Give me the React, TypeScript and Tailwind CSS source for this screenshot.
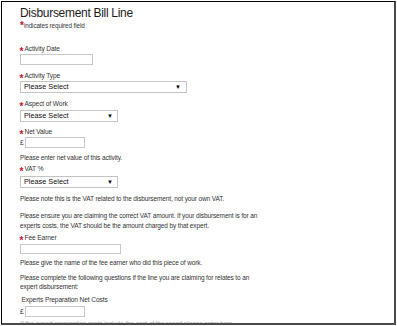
import React from "react";

const Req = () => (
  <span className="inline-block w-[4px] text-[#c8102e] font-bold text-[10px] leading-[8px] relative top-[2.5px] -ml-[0.5px] mr-[0.5px]">*</span>
);

const Label = ({ children, req = true, className = "" }: { children: React.ReactNode; req?: boolean; className?: string }) => (
  <div className={`flex items-start h-[8px] text-[6.6px] leading-[8px] tracking-[-0.1px] text-[#333] ${className}`}>
    {req ? <Req /> : <span className="inline-block w-[1px]" />}
    <span className="ml-[0.5px]">{children}</span>
  </div>
);

const Select = ({ w, className = "" }: { w: string; className?: string }) => (
  <div className={`${w} h-[12px] border border-[#c4c4c4] bg-white flex items-center justify-between pl-[3px] pr-[4px] ${className}`}>
    <span className="text-[7.3px] leading-[10px] text-[#111]">Please Select</span>
    <span className="text-[6px] leading-[10px] text-black">▼</span>
  </div>
);

const Input = ({ w, className = "" }: { w: string; className?: string }) => (
  <div className={`${w} h-[11px] border border-[#c8c8c8] bg-white ${className}`} />
);

const Money = ({ className = "" }: { className?: string }) => (
  <div className={`flex items-center ${className}`}>
    <span className="w-[5px] text-[6.6px] leading-[11px] text-[#333]">£</span>
    <div className="w-[60px] h-[11px] border border-[#c8c8c8] bg-white" />
  </div>
);

const P = ({ children, className = "" }: { children: React.ReactNode; className?: string }) => (
  <p className={`text-[6.5px] leading-[8px] tracking-[-0.12px] text-[#333] ${className}`}>{children}</p>
);

export default function App() {
  return (
    <div className="w-[397px] h-[326px] bg-white font-['Liberation_Sans',Arial,sans-serif]">
      <div className="ml-[1px] mt-[1px] w-[395px] h-[324px] border-l border-t border-black border-r-2 border-b-2 border-r-[#4a4a4a] border-b-[#4a4a4a] overflow-hidden pl-[18px]">
        <h1 className="mt-[4px] text-[12px] leading-[14px] tracking-[-0.3px] text-[#1a1a1a] font-normal">Disbursement Bill Line</h1>
        <div className="mt-[2px] flex items-start h-[8px] text-[6.3px] leading-[8px] tracking-[-0.1px] text-[#333]">
          <span className="text-[#c8102e] font-bold text-[10px] leading-[8px] relative top-[0px] w-[4px]">*</span>
          <span>indicates required field</span>
        </div>

        <Label className="mt-[15px]">Activity Date</Label>
        <Input w="w-[73px]" className="mt-[1px]" />

        <Label className="mt-[7px]">Activity Type</Label>
        <div className={`w-[167px] h-[12px] border border-[#c4c4c4] bg-white flex items-center justify-between pl-[3px] pr-[5px] mt-[1px]`}>
          <span className="text-[7.3px] leading-[10px] text-[#111]">Please Select</span>
          <span className="text-[6px] leading-[10px] text-black">▼</span>
        </div>

        <Label className="mt-[7px]">Aspect of Work</Label>
        <Select w="w-[98px]" className="mt-[2px]" />

        <Label className="mt-[6px]">Net Value</Label>
        <Money className="mt-[1px]" />

        <P className="mt-[6px]">Please enter net value of this activity.</P>

        <Label className="mt-[3px]">VAT %</Label>
        <Select w="w-[98px]" className="mt-[3px]" />

        <P className="mt-[7px]">Please note this is the VAT related to the disbursement, not your own VAT.</P>

        <P className="mt-[8px] leading-[10px]">
          Please ensure you are claiming the correct VAT amount. If your disbursement is for an
          <br />
          experts costs, the VAT should be the amount charged by that expert.
        </P>

        <Label className="mt-[3px]">Fee Earner</Label>
        <div className="w-[101px] h-[10px] border border-[#c8c8c8] bg-white mt-[2px]" />

        <P className="mt-[5px]">Please give the name of the fee earner who did this piece of work.</P>

        <P className="mt-[6px] leading-[9px]">
          Please complete the following questions if the line you are claiming for relates to an
          <br />
          expert disbursement:
        </P>

        <Label req={false} className="mt-[5px]">Experts Preparation Net Costs</Label>
        <Money className="mt-[2px]" />

        <P className="mt-[3px] text-[#aaa]">If the expert preparation costs include the cost of the report please enter here.</P>
      </div>
    </div>
  );
}
